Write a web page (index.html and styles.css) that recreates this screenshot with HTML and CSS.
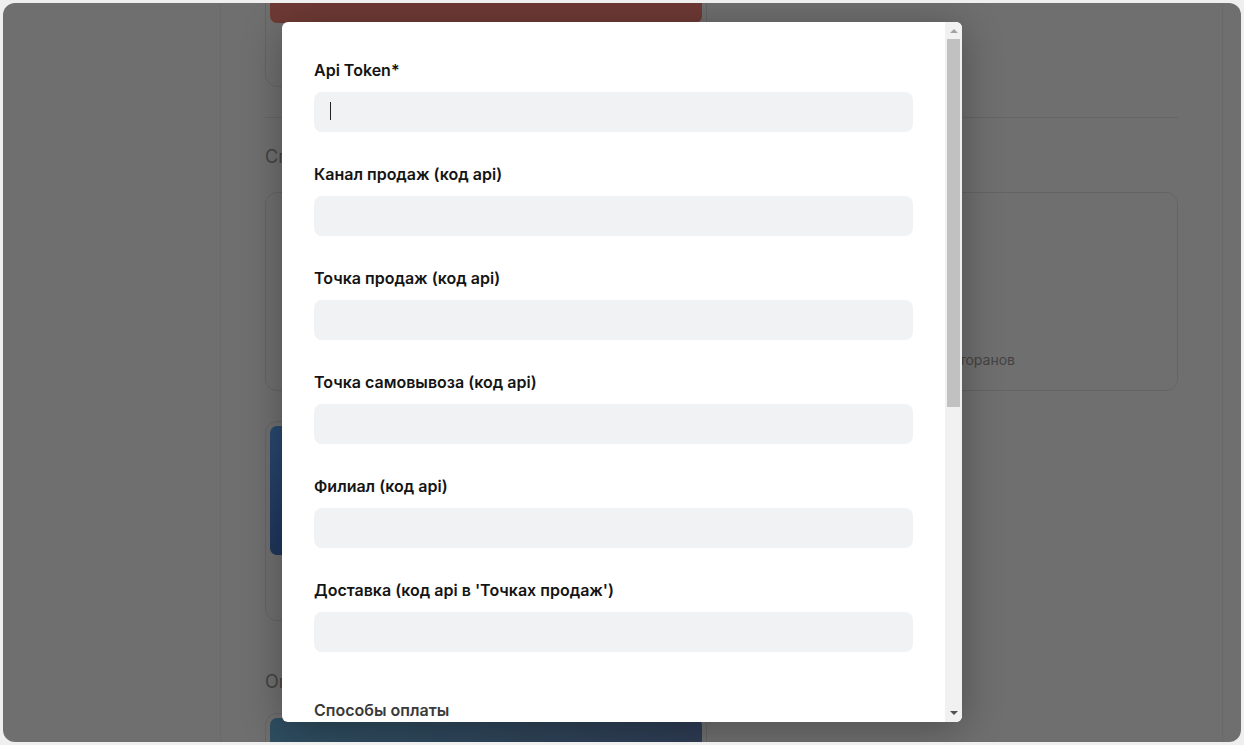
FILE: index.html
```html
<!DOCTYPE html>
<html lang="ru">
<head>
<meta charset="utf-8">
<title>Настройки интеграции</title>
<link rel="stylesheet" href="styles.css">
</head>
<body>
<div class="window">
  <aside class="sidebar"></aside>
  <main class="main">
    <div class="main-inner">
      <div class="card-grid card-grid-top">
        <div class="card card-top">
          <div class="card-img img-red"></div>
          <div class="card-body"></div>
        </div>
      </div>
      <div class="divider"></div>
      <h2 class="section-title">Способы интеграции</h2>
      <div class="card-grid card-grid-1">
        <div class="card card-plain"></div>
        <div class="card card-plain">
          <p class="card-desc">Система автоматизации ресторанов</p>
        </div>
        <div class="card card-media">
          <div class="card-img img-blue"></div>
        </div>
      </div>
      <h2 class="section-title section-title-2">Оплата</h2>
      <div class="card-grid card-grid-2">
        <div class="card card-media">
          <div class="card-img img-teal"></div>
        </div>
      </div>
    </div>
  </main>
  <div class="rightbar"></div>

  <div class="overlay">
    <div class="modal">
      <div class="modal-body">
        <form class="form">
          <div class="field">
            <label class="label">Api Token*</label>
            <div class="input-wrap">
              <input class="input" type="text">
              <span class="caret"></span>
            </div>
          </div>
          <div class="field">
            <label class="label">Канал продаж (код api)</label>
            <input class="input" type="text">
          </div>
          <div class="field">
            <label class="label">Точка продаж (код api)</label>
            <input class="input" type="text">
          </div>
          <div class="field">
            <label class="label">Точка самовывоза (код api)</label>
            <input class="input" type="text">
          </div>
          <div class="field">
            <label class="label">Филиал (код api)</label>
            <input class="input" type="text">
          </div>
          <div class="field">
            <label class="label">Доставка (код api в 'Точках продаж')</label>
            <input class="input" type="text">
          </div>
          <div class="group">
            <div class="group-title">Способы оплаты</div>
          </div>
        </form>
      </div>
      <div class="scrollbar" aria-hidden="true">
        <div class="sb-btn sb-up"></div>
        <div class="sb-track">
          <div class="sb-thumb"></div>
        </div>
        <div class="sb-btn sb-down"></div>
      </div>
    </div>
  </div>
</div>
</body>
</html>
```

FILE: styles.css
```css
* { box-sizing: border-box; }

html, body {
  margin: 0;
  height: 745px;
  overflow: hidden;
}

body {
  background: #efefef;
  padding: 3px;
  font-family: Inter, "Noto Sans", Roboto, sans-serif;
}

.window {
  position: relative;
  height: 739px;
  border-radius: 12px;
  overflow: hidden;
  background: #ffffff;
  display: flex;
}

.sidebar {
  width: 218px;
  flex: none;
  border-right: 1px solid #f3f3f3;
}

.main {
  flex: 1;
  padding: 0 44px;
  overflow: hidden;
}

.main-inner {
  margin-top: -167px;
}

.rightbar {
  width: 19px;
  flex: none;
  border-left: 1px solid #f3f3f3;
}

.card {
  border: 1px solid #e6e6e6;
  border-radius: 12px;
  padding: 4px;
  background: #fff;
}

.card-img {
  border-radius: 7px;
}

.card-top .card-img { height: 182px; }
.card-top .card-body { height: 59px; }

.img-red {
  background: #ff867b;
}

.divider {
  height: 1px;
  background: #e8e8e8;
  margin-top: 30px;
}

.section-title {
  margin: 31px 0 0;
  font-size: 18px;
  line-height: 16px;
  font-weight: 400;
  color: #9a9a9a;
}

.section-title-2 {
  margin-top: 53px;
}

.card-grid {
  display: grid;
  grid-template-columns: 442px 442px;
  column-gap: 29px;
  row-gap: 30px;
}

.card-grid-1 {
  margin-top: 27px;
}

.card-grid-2 {
  margin-top: 23px;
}

.card-plain {
  height: 199px;
  display: flex;
  align-items: flex-end;
  justify-content: flex-end;
  padding: 0 162px 20px 15px;
}

.card-desc {
  margin: 0;
  font-size: 14px;
  line-height: 20px;
  color: #9a9a9a;
  white-space: nowrap;
}

.card-media {
  height: 200px;
}

.img-blue {
  height: 129px;
  background: linear-gradient(170deg, #5fa8ff 0%, #4b80d6 55%, #456ab0 100%);
}

.img-teal {
  height: 129px;
  background: linear-gradient(100deg, #6ab4df 0%, #6a9ac8 60%, #6a88c0 100%);
}

.overlay {
  position: absolute;
  inset: 0;
  background: rgba(0, 0, 0, 0.565);
  display: flex;
  align-items: flex-start;
  justify-content: center;
  padding-top: 19px;
}

.modal {
  width: 680px;
  height: 700px;
  background: #ffffff;
  border-radius: 6px;
  overflow: hidden;
  display: flex;
  box-shadow: 0 6px 40px rgba(0, 0, 0, 0.3);
}

.modal-body {
  flex: 1;
  min-width: 0;
  overflow: hidden;
}

.scrollbar {
  width: 17px;
  flex: none;
  display: flex;
  flex-direction: column;
  background: #f1f1f1;
}

.sb-btn {
  height: 17px;
  flex: none;
  display: flex;
  align-items: center;
  justify-content: center;
}

.sb-up::before {
  content: "";
  width: 0;
  height: 0;
  border-left: 4px solid transparent;
  border-right: 4px solid transparent;
  border-bottom: 4px solid #a3a3a3;
  margin-top: 1px;
}

.sb-down::before {
  content: "";
  width: 0;
  height: 0;
  border-left: 4px solid transparent;
  border-right: 4px solid transparent;
  border-top: 4px solid #505050;
  margin-bottom: 1px;
}

.sb-track {
  flex: 1;
  padding: 0 2px;
}

.sb-thumb {
  height: 368px;
  background: #c1c1c1;
}

.form {
  padding: 39px 32px 32px;
  display: flex;
  flex-direction: column;
  gap: 33px;
}

.field {
  display: flex;
  flex-direction: column;
  gap: 13px;
}

.label {
  font-size: 16px;
  line-height: 18px;
  font-weight: 600;
  color: #141414;
}

.input-wrap {
  position: relative;
}

.input {
  display: block;
  width: 100%;
  height: 40px;
  border: none;
  outline: none;
  border-radius: 8px;
  background: #f1f2f4;
  padding: 0 16px;
  font-family: inherit;
  font-size: 15px;
}

.caret {
  position: absolute;
  left: 16px;
  top: 10px;
  width: 1px;
  height: 18px;
  background: #222;
}

.group {
  margin-top: 16px;
}

.group-title {
  font-size: 16px;
  line-height: 18px;
  font-weight: 600;
  color: #3a3a3a;
}
```
